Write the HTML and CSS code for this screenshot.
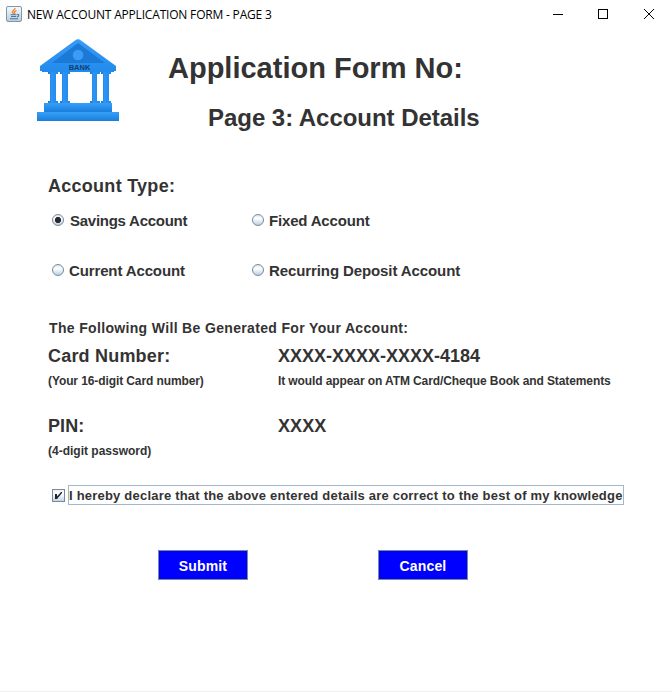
FILE: index.html
```html
<!DOCTYPE html>
<html lang="en">
<head>
<meta charset="utf-8">
<title>NEW ACCOUNT APPLICATION FORM - PAGE 3</title>
<link rel="stylesheet" href="styles.css">
</head>
<body>
<div class="titlebar">
  <svg class="java" width="16" height="16" viewBox="0 0 16 16">
    <defs><linearGradient id="jb" x2="0" y2="1"><stop stop-color="#fafcfd"/><stop offset="1" stop-color="#b9ccdc"/></linearGradient></defs>
    <rect x=".5" y=".5" width="15" height="15" rx="1.5" fill="url(#jb)" stroke="#7d98ad"/>
    <path d="M9 2C9.500 4 5.500 4.500 6.500 6.500L7.500 8M10.500 4.500C8.500 5.500 7.500 6 9 8" fill="none" stroke="#ee7d2b" stroke-width="1.300"/>
    <path d="M4.500 8.700h6M5 10.500h5M4 12.700h8M11 8.500c3-.5 2 2-.2 2.400" fill="none" stroke="#4f7594" stroke-width="1.100"/>
  </svg>
  <span class="window-title">NEW ACCOUNT APPLICATION FORM - PAGE 3</span>
  <svg class="controls" width="104" height="12" viewBox="0 0 104 12" fill="none" stroke="#000">
    <path d="M1 6.500h10"/><rect x="46.500" y="1.500" width="9" height="9"/><path d="M92 1l10 10M102 1l-10 10"/>
  </svg>
</div>
<main>
  <header>
    <svg class="bank" width="82" height="82" viewBox="0 0 82 82">
      <defs>
        <linearGradient id="bg" x2="0" y2="1"><stop stop-color="#399bfa"/><stop offset="1" stop-color="#218bec"/></linearGradient>
        <linearGradient id="base" x2="0" y2="1"><stop stop-color="#35a0f8"/><stop offset="1" stop-color="#1a7ddd"/></linearGradient>
        <linearGradient id="col"><stop stop-color="#1679d7"/><stop offset=".35" stop-color="#2c94f6"/><stop offset="1" stop-color="#2388e8"/></linearGradient>
      </defs>
      <path d="M3 27L38 1.500Q41-1 44 1.500L79 27V32H77V33H5V32H3Z" fill="url(#bg)"/>
      <path d="M15 24L41 4L68 24Z" fill="#1a7ad5"/>
      <circle cx="41" cy="16" r="5.300" fill="#3b9cf8"/>
      <g fill="url(#col)">
        <path d="M11 33H21V35H19V62H21V64H11V62H13V35H11Z"/>
        <path d="M23 33H33V35H31V62H33V64H23V62H25V35H23Z"/>
        <path d="M53 33H63V35H60V62H63V64H53V62H55V35H53Z"/>
        <path d="M64 33H74V35H72V62H74V64H64V62H66V35H64Z"/>
      </g>
      <path d="M7 64H75V73H7Z" fill="url(#base)"/>
      <path d="M0 73H82V82H0Z" fill="url(#base)"/>
      <text x="42.500" y="31" class="bank-label" text-anchor="middle">BANK</text>
    </svg>
    <div class="headings">
      <h1>Application Form No:</h1>
      <h2>Page 3: Account Details</h2>
    </div>
  </header>
  <h3 class="type-title">Account Type:</h3>
  <div class="options">
    <label class="option"><i class="radio checked"></i><span class="savings">Savings Account</span></label>
    <label class="option"><i class="radio"></i><span class="fixed">Fixed Account</span></label>
    <label class="option"><i class="radio"></i><span class="current">Current Account</span></label>
    <label class="option"><i class="radio"></i><span class="recurring">Recurring Deposit Account</span></label>
  </div>
  <p class="generated">The Following Will Be Generated For Your Account:</p>
  <div class="detail card">
    <h3 class="card-title">Card Number:</h3><h3 class="card-value">XXXX-XXXX-XXXX-4184</h3>
    <small class="card-hint">(Your 16-digit Card number)</small><small class="card-note">It would appear on ATM Card/Cheque Book and Statements</small>
  </div>
  <div class="detail">
    <h3>PIN:</h3><h3>XXXX</h3>
    <small>(4-digit password)</small>
  </div>
  <label class="declaration">
    <svg class="check" width="13" height="13" viewBox="0 0 13 13"><defs><linearGradient id="cb" x2="0" y2="1"><stop stop-color="#e4edf5"/><stop offset=".35" stop-color="#fff"/><stop offset="1" stop-color="#bed2e4"/></linearGradient></defs><rect x=".5" y=".5" width="12" height="12" fill="url(#cb)" stroke="#7a8a99"/><path d="M3 5h2v2.500L9 3h1v1L5 10H3Z" fill="#222"/></svg>
    <span class="focus">I hereby declare that the above entered details are correct to the best of my knowledge</span>
  </label>
  <div class="actions"><button>Submit</button><button>Cancel</button></div>
</main>
</body>
</html>
```
FILE: styles.css
```css
* { box-sizing: border-box; }
body {
  margin: 0;
  height: 692px;
  display: flex;
  flex-direction: column;
  background: #fff;
  border-bottom: 1px solid #f0f0f0;
  color: #333;
  font-family: "Liberation Sans", Arial, sans-serif;
  font-weight: bold;
  white-space: nowrap;
}
.titlebar {
  height: 30px;
  display: flex;
  align-items: center;
  padding: 0 16px 2px 6px;
  color: #000;
  font: 12px/28px "Open Sans", "Noto Sans", sans-serif;
}
.window-title { margin: 2px 0 0 5px; letter-spacing: -0.19px; }
.controls { margin-left: auto; }
h1, h2, h3, p { margin: 0; }
header { display: flex; height: 145px; padding: 9px 0 0 37px; }
.bank { flex: none; }
.bank-label { font-size: 7.500px; fill: #113e73; }
.headings { padding-left: 49px; }
h1 { font-size: 29px; line-height: 34px; margin-top: 12px; }
h2 { font-size: 24px; line-height: 28px; margin: 19px 0 0 40px; letter-spacing: -0.04px; }
h3 { font-size: 18px; line-height: 22px; letter-spacing: 0.1px; }
.type-title { margin-left: 48px; letter-spacing: 0.27px; }
.options {
  display: grid;
  grid-template-columns: 200px auto;
  grid-auto-rows: 50px;
  margin: -2px 0 0 52px;
}
.option { display: flex; align-items: center; font-size: 15px; }
.savings { margin-left: 1px; letter-spacing: -0.26px; }
.fixed { letter-spacing: -0.18px; }
.current { letter-spacing: -0.13px; }
.recurring { letter-spacing: -0.1px; }
.radio {
  width: 12px;
  height: 12px;
  margin: 0 5px 1px 0;
  border: 1px solid #7a8a99;
  border-radius: 50%;
  background: linear-gradient(#dce8f3, #fff 35%, #b8cfe5);
}
.checked { background: radial-gradient(circle, #292929 0 2.800px, transparent 3.300px), linear-gradient(#dce8f3, #fff 35%, #b8cfe5); }
.generated { margin: 23px 0 0 49px; font-size: 14px; line-height: 20px; letter-spacing: 0.34px; }
.detail {
  display: grid;
  grid-template-columns: 230px auto;
  grid-template-rows: 22px 28px;
  margin: 20px 0 0 48px;
}
.detail.card { margin-top: 7px; }
.card-title { letter-spacing: 0.2px; }
.card-value { letter-spacing: 0; }
.detail small { font-size: 12px; line-height: 28px; }
.detail .card-hint, .detail .card-note { letter-spacing: -0.1px; }
.declaration { display: flex; align-items: center; margin: 20px 0 0 52px; height: 20px; }
.focus {
  width: 556px;
  height: 20px;
  margin-left: 3px;
  border: 1px solid #a3b8cc;
  font-size: 13px;
  line-height: 19px;
  letter-spacing: 0.21px;
}
.actions { display: flex; gap: 130px; margin: 45px 0 0 158px; }
button {
  width: 90px;
  height: 30px;
  padding: 2px 0 0;
  border: 1px solid #7a8a99;
  background: #00f;
  color: #fff;
  font: bold 14px/20px "Liberation Sans", Arial, sans-serif;
  letter-spacing: 0.15px;
}
```
